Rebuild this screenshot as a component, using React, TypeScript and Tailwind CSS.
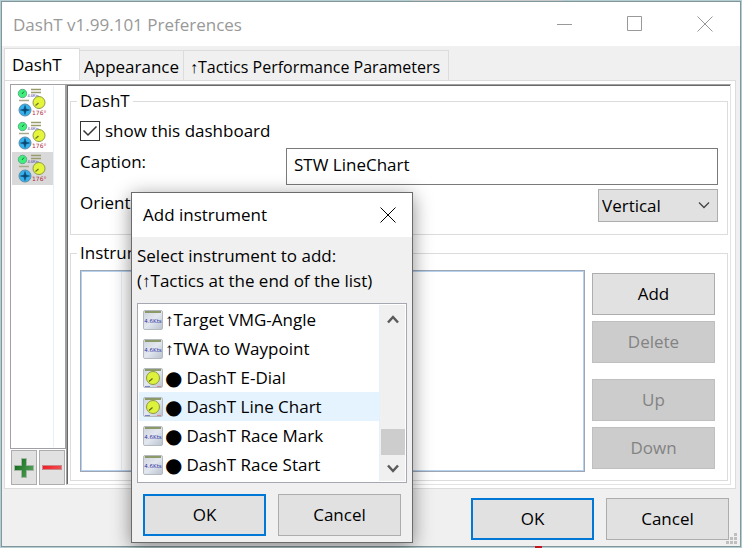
import React, { useState } from "react";

const buttonBase =
  "flex items-center justify-center h-[42px] w-[123px] border bg-[#e1e1e1] border-[#adadad] text-black disabled:bg-[#cccccc] disabled:border-[#bfbfbf] disabled:text-[#838383]";
const primaryButton =
  "flex items-center justify-center h-[42px] w-[123px] border-2 border-[#0078d7] bg-[#e1e1e1] text-black";

function DashboardIcon() {
  return (
    <svg width="30" height="30" viewBox="0 0 30 30" aria-hidden="true">
      <circle cx="5.5" cy="5.5" r="4.2" fill="#3fef7c" stroke="#5cae86" />
      <path d="M5 6l2-2.500" stroke="#17703a" />
      <path d="M14 1.500h10M14 4.500h10" stroke="#9a9c6e" strokeWidth="1.300" />
      <path d="M2 12.500h10" stroke="#a9a98d" strokeWidth="1.500" />
      <text x="10.500" y="9" fontSize="4" fill="#3c3c9c" fontFamily="Liberation Sans">4.6Kts</text>
      <circle cx="22" cy="14.500" r="6" fill="#e4f53c" stroke="#8f9a48" />
      <path d="M18.500 17.500l3-2.500" stroke="#6b7426" strokeWidth="1.200" />
      <circle cx="8" cy="22" r="6" fill="#35b2ee" stroke="#5c8ca8" />
      <path d="M8 17.500l1 3.500 3.500 1-3.500 1-1 3.500-1-3.500-3.500-1 3.500-1z" fill="#0d466e" stroke="#0d466e" strokeWidth="0.500" />
      <text x="15" y="26.500" fontSize="6" fill="#b02838" fontFamily="DejaVu Sans">176°</text>
    </svg>
  );
}

function InstrumentIcon({ kind }: { kind: "value" | "dial" }) {
  return (
    <svg width="20" height="20" viewBox="0 0 20 20" aria-hidden="true" className="shrink-0">
      <defs>
        <linearGradient id="tile" x1="0" y1="0" x2="1" y2="1">
          <stop offset="0" stopColor="#cdd3dc" />
          <stop offset="0.5" stopColor="#e3e8f0" />
          <stop offset="1" stopColor="#b9c1cd" />
        </linearGradient>
      </defs>
      <rect x="0.5" y="0.5" width="19" height="19" rx="1.500" fill="url(#tile)" stroke="#b4b9c0" />
      <path d="M2 2h16" stroke="#83925a" strokeWidth="1.800" />
      {kind === "value" ? (
        <text x="10" y="12.500" fontSize="5.5" textAnchor="middle" fill="#3434a4" fontFamily="DejaVu Sans">
          4.6Kts
        </text>
      ) : (
        <>
          <circle cx="10" cy="10" r="6.500" fill="#ddf23c" stroke="#8d993e" />
          <path d="M6 13.500l3.500-3" stroke="#5f6a20" strokeWidth="1.200" />
          <path d="M2 18.500h5" stroke="#7e86c0" />
          <path d="M14 18.500h4" stroke="#d08a94" />
        </>
      )}
    </svg>
  );
}

function CloseIcon() {
  return (
    <svg width="16" height="16" viewBox="0 0 16 16" fill="none" stroke="currentColor" aria-hidden="true">
      <path d="M0.500 0.500l15 15M15.500 0.500l-15 15" />
    </svg>
  );
}

const instruments: { name: string; kind: "value" | "dial"; dot?: boolean }[] = [
  { name: "↑Target VMG-Angle", kind: "value" },
  { name: "↑TWA to Waypoint", kind: "value" },
  { name: "DashT E-Dial", kind: "dial", dot: true },
  { name: "DashT Line Chart", kind: "dial", dot: true },
  { name: "DashT Race Mark", kind: "value", dot: true },
  { name: "DashT Race Start", kind: "value", dot: true },
];

function AddInstrumentDialog() {
  const [selected, setSelected] = useState(3);
  return (
    <div
      role="dialog"
      aria-labelledby="add-title"
      className="absolute left-[131px] top-[192px] w-[282px] border border-[#6b6b6b] bg-[#f0f0f0] shadow-[0_4px_18px_rgba(0,0,0,0.45)]"
    >
      <div className="flex h-11 items-center justify-between bg-white pl-[11px] pr-4">
        <h2 id="add-title">Add instrument</h2>
        <button type="button" aria-label="Close dialog">
          <CloseIcon />
        </button>
      </div>
      <div className="px-[5px] pt-1.5">
        <p className="whitespace-nowrap leading-[25px]">
          Select instrument to add:
          <br />
          (↑Tactics at the end of the list)
        </p>
        <div className="mt-2.5 flex border border-[#a5a8b0] bg-white p-px">
          <ul role="listbox" aria-label="Instruments" className="grow border-r border-[#e5f0fa] pb-0.5">
            {instruments.map((item, i) => (
              <li
                key={item.name}
                role="option"
                aria-selected={selected === i}
                onClick={() => setSelected(i)}
                className={`flex h-[29px] items-center gap-0.5 whitespace-nowrap pl-1 ${selected === i ? "bg-[#e5f3ff]" : ""}`}
              >
                <InstrumentIcon kind={item.kind} />
                <span className="flex items-center gap-1">
                  {item.dot && <span className="text-xl leading-5 font-['DejaVu_Sans',sans-serif]">●</span>}
                  {item.name}
                </span>
              </li>
            ))}
          </ul>
          <div className="flex w-[25px] flex-col items-center bg-[#f0f0f0]">
            <button type="button" aria-label="Scroll up" className="flex h-7 w-full items-center justify-center">
              <svg width="12" height="9" viewBox="0 0 12 9" fill="none" stroke="#5a5a5a" strokeWidth="2.500" aria-hidden="true">
                <path d="M1 7.500L6 2l5 5.500" />
              </svg>
            </button>
            <div className="grow" />
            <div className="h-[26px] w-6 bg-[#cdcdcd]" />
            <button type="button" aria-label="Scroll down" className="flex h-[26px] w-full items-center justify-center">
              <svg width="12" height="9" viewBox="0 0 12 9" fill="none" stroke="#5a5a5a" strokeWidth="2.500" aria-hidden="true">
                <path d="M1 1.500L6 7l5-5.500" />
              </svg>
            </button>
          </div>
        </div>
        <div className="flex gap-3 px-1.5 pb-1.5 pt-[11px]">
          <button type="button" className={primaryButton}>OK</button>
          <button type="button" className={buttonBase}>Cancel</button>
        </div>
      </div>
    </div>
  );
}

export default function App() {
  return (
    <div className="relative flex min-h-screen flex-col bg-[#b4cdd1] p-px text-[17px] leading-5 text-black font-['Open_Sans','Liberation_Sans',sans-serif]">
      <div className="absolute left-[412px] top-0 h-px w-[150px] bg-[#c9c9c9]" />
      <div className="flex grow flex-col border border-[#82979b] bg-[#f0f0f0]">
        <header className="flex h-11 shrink-0 items-center justify-between bg-white pl-[11px] pr-[27px] text-[#999999]">
          <h1 className="pt-0.5">DashT v1.99.101 Preferences</h1>
          <div className="flex gap-[54px]">
            <button type="button" aria-label="Minimize">
              <svg width="16" height="16" stroke="currentColor" aria-hidden="true"><path d="M0 8.500h15" /></svg>
            </button>
            <button type="button" aria-label="Maximize">
              <svg width="16" height="16" stroke="currentColor" fill="none" aria-hidden="true"><path d="M0.500 0.500h14v14h-14z" /></svg>
            </button>
            <button type="button" aria-label="Close">
              <CloseIcon />
            </button>
          </div>
        </header>

        <main className="flex grow flex-col pl-0.5 pr-1 pt-0.5">
          <div role="tablist" className="flex items-end whitespace-nowrap">
            <button type="button" role="tab" aria-selected="true" className="-mb-px h-[33px] w-[76px] border border-b-0 border-[#dcdcdc] bg-white pl-[7px] text-left">
              DashT
            </button>
            <button type="button" role="tab" aria-selected="false" className="h-[30px] w-[104px] border border-b-0 border-l-0 border-[#dcdcdc] pl-1 pt-0.5 text-left">
              Appearance
            </button>
            <button type="button" role="tab" aria-selected="false" className="h-[30px] w-[265px] border border-b-0 border-l-0 border-[#dcdcdc] pl-1.5 pt-0.5 text-left text-base leading-5">
              ↑Tactics Performance Parameters
            </button>
          </div>

          <div className="flex grow border border-[#dcdcdc] bg-white py-[3px] pl-[5px] pr-1">
            <div className="flex w-14 flex-col">
              <ul role="listbox" aria-label="Dashboards" className="grow border border-[#a0a0a6] pl-px pt-px">
                {[0, 1, 2].map((n) => (
                  <li
                    key={n}
                    role="option"
                    aria-selected={n === 2}
                    aria-label={`Dashboard ${n + 1}`}
                    className={`flex h-[33px] w-[42px] items-center border-r border-[#e5f0fa] pl-[5px] ${n === 2 ? "bg-[#d9d9d9]" : ""}`}
                  >
                    <DashboardIcon />
                  </li>
                ))}
                <li aria-hidden="true" className="h-[262px] w-[42px] border-r border-[#e5f0fa]" />
              </ul>
              <div className="flex gap-0.5 pl-px pt-px">
                <button type="button" aria-label="Add dashboard" className="flex h-[35px] w-[26px] items-center justify-center border border-[#adadad] bg-[#e1e1e1]">
                  <svg width="20" height="20" viewBox="0 0 20 20" aria-hidden="true">
                    <defs>
                      <linearGradient id="plus" x1="0" y1="0" x2="1" y2="0.500">
                        <stop offset="0" stopColor="#0c6412" />
                        <stop offset="1" stopColor="#4f9e55" />
                      </linearGradient>
                    </defs>
                    <path d="M7.500 0.500h5v7h7v5h-7v7h-5v-7h-7v-5h7z" fill="url(#plus)" stroke="#a3b5a4" />
                  </svg>
                </button>
                <button type="button" aria-label="Remove dashboard" className="flex h-[35px] w-[26px] items-center justify-center border border-[#adadad] bg-[#e1e1e1]">
                  <svg width="20" height="6" viewBox="0 0 20 6" aria-hidden="true">
                    <defs>
                      <linearGradient id="minus" x1="0" y1="0" x2="1" y2="0.300">
                        <stop offset="0" stopColor="#f01820" />
                        <stop offset="1" stopColor="#f0484c" />
                      </linearGradient>
                    </defs>
                    <rect x="0.500" y="0.500" width="19" height="4" fill="url(#minus)" stroke="#c88a8c" />
                  </svg>
                </button>
              </div>
            </div>

            <div className="flex grow border border-b-[#e3e3e3] border-l-[#a0a0a0] border-r-[#e3e3e3] border-t-[#a0a0a0]">
              <div className="flex grow flex-col gap-2 border-l border-t border-[#696969] pb-[3px] pl-0.5 pr-0.5 pt-[5px]">
                <fieldset className="border border-[#dcdcdc] pb-3 pl-1.5 pr-[9px]">
                  <legend className="px-[3px]">DashT</legend>
                  <div className="flex flex-col pl-[3px] pt-2.5">
                    <label className="flex items-center gap-[5px]">
                      <span className="relative flex size-5">
                        <input type="checkbox" defaultChecked className="peer size-5 appearance-none border border-[#333333] bg-white" />
                        <svg className="pointer-events-none absolute inset-0 hidden peer-checked:block" width="20" height="20" fill="none" stroke="#333333" strokeWidth="1.500" aria-hidden="true">
                          <path d="M3.500 9.500l4.500 4.500 8.500-8.500" />
                        </svg>
                      </span>
                      show this dashboard
                    </label>
                    <div className="mt-[7px] flex">
                      <label htmlFor="caption" className="w-[206px] shrink-0 pt-1">Caption:</label>
                      <input id="caption" type="text" defaultValue="STW LineChart" className="h-[37px] min-w-0 grow border border-[#7a7a7a] bg-white pb-1 pl-[7px]" />
                    </div>
                    <div className="mt-1 flex justify-between">
                      <label htmlFor="orientation" className="pt-1">Orientation:</label>
                      <div className="relative">
                        <select id="orientation" defaultValue="Vertical" className="h-[33px] w-[120px] appearance-none border border-[#adadad] bg-[#e1e1e1] pl-[3px]">
                          <option>Vertical</option>
                          <option>Horizontal</option>
                        </select>
                        <svg className="pointer-events-none absolute right-2 top-3" width="12" height="8" fill="none" stroke="#444444" strokeWidth="1.300" aria-hidden="true">
                          <path d="M1 1.500l5 5 5-5" />
                        </svg>
                      </div>
                    </div>
                  </div>
                </fieldset>

                <fieldset className="grow border border-[#dcdcdc] pb-2 pl-1.5 pr-3">
                  <legend className="px-[3px]">Instruments</legend>
                  <div className="flex gap-[7px] pl-[3px] pt-[7px]">
                    <div role="listbox" aria-label="Dashboard instruments" className="grow border border-[#a0a5b4] bg-white">
                      <div className="h-full border border-[#b4d2f0]">
                        <div className="ml-[39px] h-full border-l border-[#e5f0fa]" />
                      </div>
                    </div>
                    <div className="flex flex-col gap-1.5 pb-[3px] pt-[3px]">
                      <button type="button" className={buttonBase}>Add</button>
                      <button type="button" disabled className={buttonBase}>Delete</button>
                      <button type="button" disabled className={`${buttonBase} mt-2.5`}>Up</button>
                      <button type="button" disabled className={buttonBase}>Down</button>
                    </div>
                  </div>
                </fieldset>
              </div>
            </div>
          </div>
        </main>

        <footer className="relative flex justify-end gap-3 pb-1.5 pr-[11px] pt-[9px]">
          <button type="button" className={primaryButton}>OK</button>
          <button type="button" className={buttonBase}>Cancel</button>
          <svg className="absolute bottom-0.5 right-[3px]" width="11" height="11" fill="#bfbfbf" aria-hidden="true">
            <path d="M8 0h3v3h-3zM4 4h3v3h-3zM8 4h3v3h-3zM0 8h3v3h-3zM4 8h3v3h-3zM8 8h3v3h-3z" />
          </svg>
        </footer>
      </div>
      <div className="absolute bottom-0 left-[535px] h-0.5 w-[7px] bg-[#c81420]" />
      <AddInstrumentDialog />
    </div>
  );
}
